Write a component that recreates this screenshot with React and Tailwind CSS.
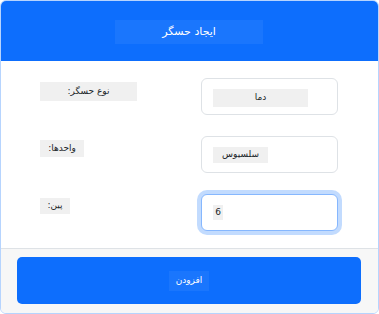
import React from "react";

const font = { fontFamily: '"DejaVu Sans", "Noto Sans", sans-serif' };

function Row({ label, labelW, labelH, value, valueW, valueH, focused }) {
  return (
    <div className="flex items-start">
      <div className="w-[200px] shrink-0 pl-[39px] pt-[4px]">
        <span
          className="flex items-center justify-center bg-[#f0f0f0] text-[9px] text-[#212529]"
          style={{ width: labelW, height: labelH }}
          dir="rtl"
        >
          {label}
        </span>
      </div>
      <div
        className={
          "w-[137px] h-[37px] shrink-0 rounded-[6px] bg-white pl-[11px] pt-[10px] " +
          (focused
            ? "border border-[#86b7fe] ring-4 ring-[#0d6efd]/25"
            : "border border-[#dee2e6]")
        }
      >
        <span
          className="flex items-center justify-center bg-[#f0f0f0] text-[9px] text-[#212529]"
          style={{ width: valueW, height: valueH }}
          dir="rtl"
        >
          {value}
        </span>
      </div>
    </div>
  );
}

export default function App() {
  return (
    <div className="w-[379px] h-[314px] bg-white" style={font}>
      <div className="w-[379px] h-[314px] flex flex-col border border-[#b6d4fe] rounded-[6px] overflow-hidden">
        <div className="h-[60px] bg-[#0d6efd] flex justify-center pt-[19px] pr-[1px]">
          <span className="w-[148px] h-[24px] bg-[#1a76fd] flex items-center justify-center text-white text-[11px]" dir="rtl">
            ایجاد حسگر
          </span>
        </div>
        <div className="h-[187px] bg-white flex flex-col gap-[21px] pt-[17px]">
          <Row label="نوع حسگر:" labelW={97} labelH={19} value="دما" valueW={95} valueH={18} />
          <Row label="واحدها:" labelW={44} labelH={17} value="سلسیوس" valueW={55} valueH={16} />
          <Row label="پین:" labelW={30} labelH={16} value="6" valueW={10} valueH={15} focused />
        </div>
        <div className="flex-1 border-t border-[#dee2e6] bg-[#f7f7f7] px-[16px] pt-[8px]">
          <div className="w-[344px] h-[47px] rounded-[5px] bg-[#0d6efd] flex items-center justify-center">
            <span className="w-[40px] h-[20px] bg-[#1a76fd] flex items-center justify-center text-white text-[9px]" dir="rtl">
              افزودن
            </span>
          </div>
        </div>
      </div>
    </div>
  );
}
